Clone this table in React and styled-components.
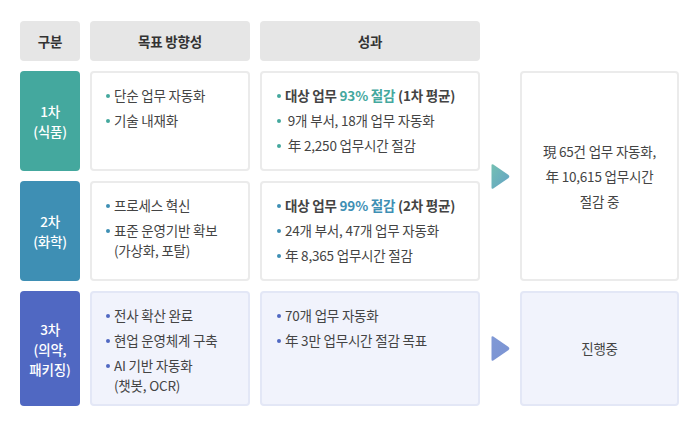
import React from "react";
import styled, { createGlobalStyle } from "styled-components";

const Global = createGlobalStyle`
  html, body { margin: 0; padding: 0; background: #fff; }
  body { font-family: "Noto Sans CJK KR", "Noto Sans", sans-serif; color: #444; }
`;

const Grid = styled.div`
  display: grid;
  grid-template-columns: 60px 160px 220px 20px 159px;
  grid-template-rows: 40px 100px 100px 115px;
  column-gap: 10px;
  row-gap: 10px;
  padding: 21px 20px 0 20px;
  width: 700px;
  box-sizing: border-box;
`;

const Head = styled.div`
  background: #e6e6e6;
  border-radius: 4px;
  display: flex;
  align-items: center;
  justify-content: center;
  font-size: 13.5px;
  font-weight: 700;
  color: #333;
  letter-spacing: -0.2px;
`;

const Label = styled.div`
  background: ${(p) => p.$color};
  border-radius: 4px;
  display: flex;
  align-items: center;
  justify-content: center;
  text-align: center;
  color: #fff;
  font-size: 13.5px;
  font-weight: 500;
  line-height: 20px;
  letter-spacing: -0.2px;
`;

const Cell = styled.div`
  background: ${(p) => (p.$soft ? "#f1f3fc" : "#fff")};
  border: 2px solid ${(p) => (p.$soft ? "#e3e7f6" : "#ebebeb")};
  border-radius: 4px;
  box-sizing: border-box;
  padding: ${(p) => (p.$wide ? "12px 6px 0 15px" : "12px 6px 0 14px")};
`;

const List = styled.ul`
  list-style: none;
  margin: 0;
  padding: 0;
  display: flex;
  flex-direction: column;
  gap: 5px;
`;

const Item = styled.li`
  position: relative;
  padding-left: 8px;
  font-size: 13.5px;
  line-height: 20px;
  color: #444;
  letter-spacing: -0.2px;
  white-space: nowrap;
  font-weight: ${(p) => (p.$bold ? 700 : 400)};
  &::before {
    content: "";
    position: absolute;
    left: 0;
    top: 9px;
    width: 4px;
    height: 4px;
    border-radius: 50%;
    background: ${(p) => p.$dot};
  }
`;

const Hl = styled.span`
  color: ${(p) => p.$color};
`;

const ArrowWrap = styled.div`
  grid-row: ${(p) => p.$rows};
  grid-column: 4;
  display: flex;
  align-items: center;
  justify-content: center;
`;

const Result = styled.div`
  grid-row: ${(p) => p.$rows};
  grid-column: 5;
  background: ${(p) => (p.$soft ? "#f1f3fc" : "#fff")};
  border: 2px solid ${(p) => (p.$soft ? "#e3e7f6" : "#ebebeb")};
  border-radius: 4px;
  box-sizing: border-box;
  display: flex;
  align-items: center;
  justify-content: center;
  text-align: center;
  font-size: 13.5px;
  line-height: 25px;
  color: #444;
  letter-spacing: -0.2px;
`;

const Spacer = styled.div`
  grid-column: 4 / span 2;
`;

function Arrow({ id, from, to }) {
  return (
    <svg width="20" height="27" viewBox="0 0 20 27">
      <defs>
        <linearGradient id={id} x1="0" y1="0" x2="1" y2="1">
          <stop offset="0" stopColor={from} />
          <stop offset="1" stopColor={to} />
        </linearGradient>
      </defs>
      <path
        d="M1.5 2.5 Q1.5 0.5 3.3 1.5 L18.6 12 Q20 13.5 18.6 15 L3.3 25.5 Q1.5 26.5 1.5 24.5 Z"
        fill={`url(#${id})`}
      />
    </svg>
  );
}

const TEAL = "#44a89e";
const BLUE = "#3e8fb4";
const INDIGO = "#5068c2";

export default function App() {
  return (
    <>
      <Global />
      <Grid>
        <Head>구분</Head>
        <Head>목표 방향성</Head>
        <Head>성과</Head>
        <Spacer />

        <Label $color={TEAL}>
          1차
          <br />
          (식품)
        </Label>
        <Cell>
          <List>
            <Item $dot={TEAL}>단순 업무 자동화</Item>
            <Item $dot={TEAL}>기술 내재화</Item>
          </List>
        </Cell>
        <Cell $wide>
          <List>
            <Item $dot={TEAL} $bold>
              대상 업무 <Hl $color={TEAL}>93% 절감</Hl> (1차 평균)
            </Item>
            <Item $dot={TEAL}>&nbsp;9개 부서, 18개 업무 자동화</Item>
            <Item $dot={TEAL}>&nbsp;年 2,250 업무시간 절감</Item>
          </List>
        </Cell>
        <ArrowWrap $rows="2 / span 2">
          <Arrow id="g1" from="#74c0b2" to="#64a2c6" />
        </ArrowWrap>
        <Result $rows="2 / span 2">
          現 65건 업무 자동화,
          <br />
          年 10,615 업무시간
          <br />
          절감 중
        </Result>

        <Label $color={BLUE}>
          2차
          <br />
          (화학)
        </Label>
        <Cell>
          <List>
            <Item $dot={BLUE}>프로세스 혁신</Item>
            <Item $dot={BLUE}>
              표준 운영기반 확보
              <br />
              (가상화, 포탈)
            </Item>
          </List>
        </Cell>
        <Cell $wide>
          <List>
            <Item $dot={BLUE} $bold>
              대상 업무 <Hl $color={BLUE}>99% 절감</Hl> (2차 평균)
            </Item>
            <Item $dot={BLUE}>24개 부서, 47개 업무 자동화</Item>
            <Item $dot={BLUE}>年 8,365 업무시간 절감</Item>
          </List>
        </Cell>

        <Label $color={INDIGO}>
          3차
          <br />
          (의약,
          <br />
          패키징)
        </Label>
        <Cell $soft>
          <List>
            <Item $dot={INDIGO}>전사 확산 완료</Item>
            <Item $dot={INDIGO}>현업 운영체계 구축</Item>
            <Item $dot={INDIGO}>
              AI 기반 자동화
              <br />
              (챗봇, OCR)
            </Item>
          </List>
        </Cell>
        <Cell $soft $wide>
          <List>
            <Item $dot={INDIGO}>70개 업무 자동화</Item>
            <Item $dot={INDIGO}>年 3만 업무시간 절감 목표</Item>
          </List>
        </Cell>
        <ArrowWrap $rows="4">
          <Arrow id="g2" from="#8099d6" to="#7b93d2" />
        </ArrowWrap>
        <Result $rows="4" $soft>
          진행중
        </Result>
      </Grid>
    </>
  );
}
